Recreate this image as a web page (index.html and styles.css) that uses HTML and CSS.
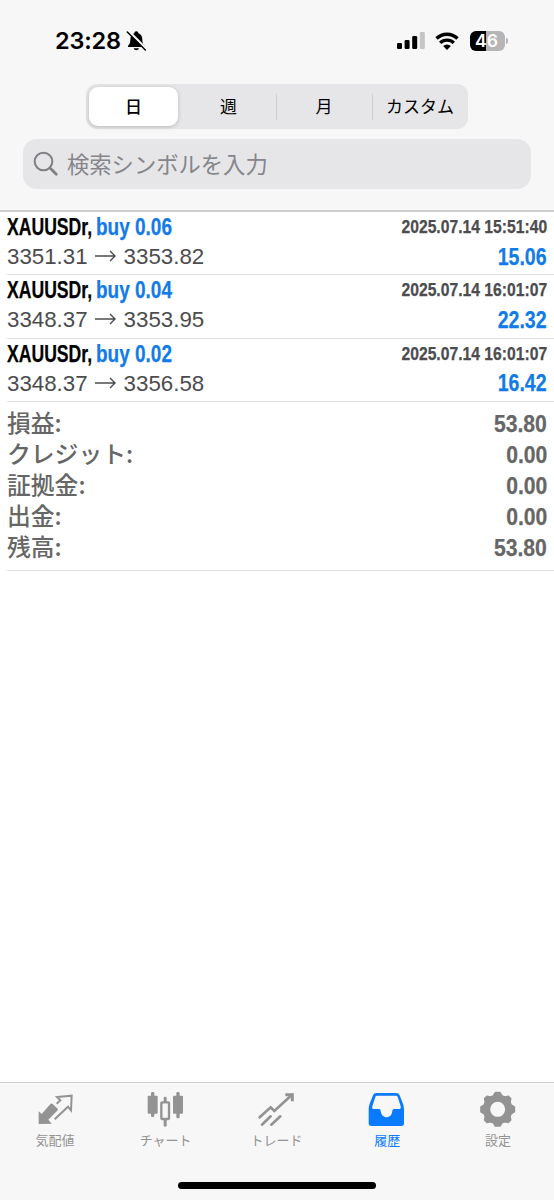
FILE: index.html
```html
<!DOCTYPE html>
<html lang="ja">
<head>
<meta charset="utf-8">
<title>履歴</title>
<link rel="stylesheet" href="styles.css">
</head>
<body>
<div class="screen">
  <header class="header">
    <div class="status">
      <div class="status-left">
        <span class="clock">23:28</span>
        <svg class="bell" width="21" height="22" viewBox="0 0 63 66">
          <path d="M31 4c-4 0-6 2-6 6-9 3-12 11-12 20 0 10-3 13-7 17v4h50v-4c-4-4-7-7-7-17 0-9-3-17-12-20 0-4-2-6-6-6z"/>
          <path d="M23 55h16c-2 8-14 8-16 0z"/>
          <path d="M7 3l53 53" stroke="#f7f7f7" stroke-width="8"/>
          <path d="M4 6l54 54" stroke="#000" stroke-width="4.5" stroke-linecap="round"/>
        </svg>
      </div>
      <div class="status-right">
        <svg width="28" height="18" viewBox="0 0 28 18">
          <rect x="0" y="11" width="5" height="6" rx="1.3"/>
          <rect x="7.6" y="8" width="5" height="9" rx="1.3"/>
          <rect x="15.2" y="4" width="5" height="13" rx="1.3"/>
          <rect x="22.8" y="0" width="5" height="17" rx="1.3" fill="#c5c5c5"/>
        </svg>
        <svg class="wifi" width="24" height="18" viewBox="0 0 24 18" fill="none" stroke="#000" stroke-width="3.4">
          <path d="M1.5 6.5a15 15 0 0 1 21 0"/>
          <path d="M5.2 10.9a9.7 9.7 0 0 1 13.6 0"/>
          <path d="M8.1 14a5.6 5.6 0 0 1 7.8 0L12 17.9z" fill="#000" stroke="none"/>
        </svg>
        <div class="battery">46</div>
        <i class="battery-cap"></i>
      </div>
    </div>
    <div class="segments">
      <span class="segment selected">日</span>
      <span class="segment">週</span>
      <span class="segment divided">月</span>
      <span class="segment divided">カスタム</span>
    </div>
    <div class="search">
      <svg width="26" height="26" viewBox="0 0 26 26" fill="none" stroke="#7f7f84" stroke-linecap="round">
        <circle cx="10.5" cy="10.5" r="8.8" stroke-width="2"/>
        <path d="M17 17l6.3 6.3" stroke-width="2.8"/>
      </svg>
      <span>検索シンボルを入力</span>
    </div>
  </header>

  <main class="history">
    <section class="deal">
      <div class="line"><span class="symbol">XAUUSDr,</span><span class="side">buy 0.06</span><span class="time">2025.07.14 15:51:40</span></div>
      <div class="line prices"><span>3351.31</span><svg class="arrow" width="21" height="12" viewBox="0 0 21 12"><path d="M0 6h20M15 1l5 5-5 5"/></svg><span>3353.82</span><span class="profit">15.06</span></div>
    </section>
    <section class="deal">
      <div class="line"><span class="symbol">XAUUSDr,</span><span class="side">buy 0.04</span><span class="time">2025.07.14 16:01:07</span></div>
      <div class="line prices"><span>3348.37</span><svg class="arrow" width="21" height="12" viewBox="0 0 21 12"><path d="M0 6h20M15 1l5 5-5 5"/></svg><span>3353.95</span><span class="profit">22.32</span></div>
    </section>
    <section class="deal">
      <div class="line"><span class="symbol">XAUUSDr,</span><span class="side">buy 0.02</span><span class="time">2025.07.14 16:01:07</span></div>
      <div class="line prices"><span>3348.37</span><svg class="arrow" width="21" height="12" viewBox="0 0 21 12"><path d="M0 6h20M15 1l5 5-5 5"/></svg><span>3356.58</span><span class="profit">16.42</span></div>
    </section>
    <section class="summary">
      <div class="total"><span>損益:</span><b>53.80</b></div>
      <div class="total"><span>クレジット:</span><b>0.00</b></div>
      <div class="total"><span>証拠金:</span><b>0.00</b></div>
      <div class="total"><span>出金:</span><b>0.00</b></div>
      <div class="total"><span>残高:</span><b>53.80</b></div>
    </section>
  </main>

  <footer class="footer">
    <nav class="tabs">
      <div class="tab">
        <svg width="40" height="40" viewBox="46 39 120 120">
          <path d="M57 147V109l9 8 27-31q3-2 6 1l15 14q2 3 0 5l-28 28 10 12z"/>
          <path d="M105 133l40-38 9 11 2-44-44 4 10 10-11 10" fill="none" stroke="#939393" stroke-width="6"/>
        </svg>
        <span>気配値</span>
      </div>
      <div class="tab">
        <svg width="40" height="40" viewBox="379 39 120 120">
          <rect x="384" y="62" width="30" height="54" rx="3"/><rect x="394" y="51" width="10" height="75" rx="4"/>
          <rect x="460" y="62" width="30" height="54" rx="3"/><rect x="470" y="51" width="10" height="79" rx="4"/>
          <rect x="432" y="65" width="9" height="18" rx="4"/><rect x="432" y="132" width="9" height="23" rx="4"/>
          <rect x="425" y="82" width="23" height="50" rx="2" fill="none" stroke="#939393" stroke-width="7"/>
        </svg>
        <span>チャート</span>
      </div>
      <div class="tab">
        <svg width="40" height="40" viewBox="51 39 120 120" fill="none" stroke="#939393" stroke-width="8" stroke-linecap="round">
          <path d="M62 127l33-30 11 11 53-49"/>
          <path d="M139 59h21v20" stroke-linecap="butt" stroke-width="9"/>
          <path d="M69 149l26-25M97 149l27-25"/>
        </svg>
        <span>トレード</span>
      </div>
      <div class="tab active">
        <svg width="40" height="40" viewBox="383 39 120 120">
          <path fill-rule="evenodd" d="M411 54h60q7 0 10 7l10 25q3 8 3 16v43q0 8-8 8h-90q-8 0-8-8v-43q0-8 3-16l10-25q3-7 10-7zM413 62q-4 0-5 4l-9 28q-2 8 4 8h16q5 0 5 5c2 26 34 26 35 0q0-5 5-5h16q6 0 4-8l-9-28q-1-4-5-4z"/>
        </svg>
        <span>履歴</span>
      </div>
      <div class="tab">
        <svg width="40" height="40" viewBox="176 39 120 120">
          <g transform="translate(235 103)">
            <path fill-rule="evenodd" stroke="#939393" stroke-width="5" stroke-linejoin="round" d="M-7-50H7L13-40 22-37 32-39 39-32 37-22 40-13 50-7V7L40 13 37 22 39 32 32 39 22 37 13 40 7 50H-7L-13 40-22 37-32 39-39 32-37 22-40 13-50 7V-7L-40-13-37-22-39-32-32-39-22-37-13-40zM0-25a25 25 0 1 0 0 50 25 25 0 1 0 0-50z"/>
          </g>
        </svg>
        <span>設定</span>
      </div>
    </nav>
    <div class="home-bar"></div>
  </footer>
</div>
</body>
</html>
```

FILE: styles.css
```css
* { box-sizing: border-box; }
body {
  margin: 0;
  background: #fff;
  font-family: "Liberation Sans", "Noto Sans CJK JP", sans-serif;
  color: #000;
}
.screen { width: 554px; height: 1200px; display: flex; flex-direction: column; }

.header { height: 212px; flex: none; background: #f7f7f7; border-bottom: 2px solid #cecece; }
.status { height: 84px; padding: 0 46px 2px 55px; display: flex; justify-content: space-between; align-items: center; }
.status-left, .status-right { display: flex; align-items: center; }
.clock { font: 600 23.5px/28px Inter, sans-serif; letter-spacing: -0.2px; }
.bell { margin-left: 5px; }
.wifi { margin: 0 11px 0 10px; }
.battery {
  width: 35px; height: 20px; padding-right: 2px; border-radius: 6px;
  background: linear-gradient(90deg, #000 47%, #b5b5b5 47%);
  color: #fff; font: 600 17.5px/20px Inter, sans-serif; text-align: center;
}
.battery-cap { width: 2px; height: 6px; margin-left: 1px; border-radius: 0 2px 2px 0; background: #b5b5b5; }

.segments {
  width: 382px; height: 45px; margin-left: 86px; padding: 3px 0 3px 3px;
  display: grid; grid-template-columns: 89px 98px 96px 96px;
  background: #e6e6e8; border-radius: 11px;
}
.segment {
  display: flex; align-items: center; justify-content: center; padding-bottom: 2px;
  font: 400 17px/36px "Noto Sans CJK JP", sans-serif;
}
.segment:nth-child(2) { padding-left: 3px; }
.selected { background: #fff; border-radius: 9px; box-shadow: 0 1px 4px rgba(0, 0, 0, .2); font-weight: 500; }
.divided { background: linear-gradient(#cfcfd2, #cfcfd2) 0 50% / 1px 26px no-repeat; }

.search {
  width: 508px; height: 50px; margin: 10px 0 0 23px; padding-left: 10px;
  display: flex; align-items: center; gap: 8px;
  background: #e6e6e8; border-radius: 14px; color: #85858a;
  font: 400 22.3px/48px "Noto Sans CJK JP", sans-serif;
}
.search span { padding-bottom: 2px; }

.history { flex: 1; padding-left: 7px; }
.deal { height: 63.3px; padding-right: 7px; border-bottom: 1px solid #dedede; }
.line { display: flex; align-items: center; height: 30px; white-space: nowrap; }
.line:first-child { height: 31px; }

/* Condensed bold lettering */
.symbol, .side, .time, .profit, .total b { font-weight: 700; transform-origin: 0 50%; -webkit-text-stroke: .25px currentColor; }
.symbol { font-size: 23.3px; width: 89px; transform: scaleX(.755); }
.side { font-size: 23px; color: #127be8; transform: scaleX(.825); }
.time { margin-left: auto; font-size: 17.8px; color: #4c4c4f; transform: scaleX(.882); }
.profit { margin-left: auto; font-size: 23px; color: #127be8; transform: scaleX(.85); }
.time, .profit, .total b { transform-origin: 100% 50%; }

.prices { font-size: 22.3px; color: #4c4c4f; }
.prices > * { margin-top: -2px; }
.prices .arrow { margin: -4px 8px 0 7px; fill: none; stroke: #4c4c4f; stroke-width: 1.4; }

.summary { height: 169px; padding: 7px 7px 0 0; border-bottom: 1px solid #dedede; }
.total { height: 31px; display: flex; justify-content: space-between; align-items: center; color: #666; }
.total span { margin-top: -4px; font: 500 23.8px/28px "Noto Sans CJK JP", sans-serif; }
.total b { font-size: 24.3px; transform: scaleX(.87); }

.footer { height: 118px; flex: none; background: #f7f7f7; border-top: 1px solid #cfcfcf; }
.tabs { display: grid; grid-template-columns: repeat(5, 1fr); height: 100px; padding-top: 5px; }
.tab {
  display: flex; flex-direction: column; align-items: center; padding-right: 1px;
  color: #939393; fill: #939393;
  font: 400 13px/20px "Noto Sans CJK JP", sans-serif;
}
.tab span { margin-top: 2px; }
.active { color: #0a7aff; fill: #0a7aff; }
.home-bar { width: 198px; height: 7px; margin: -1px auto 0; border-radius: 4px; background: #000; }
```
